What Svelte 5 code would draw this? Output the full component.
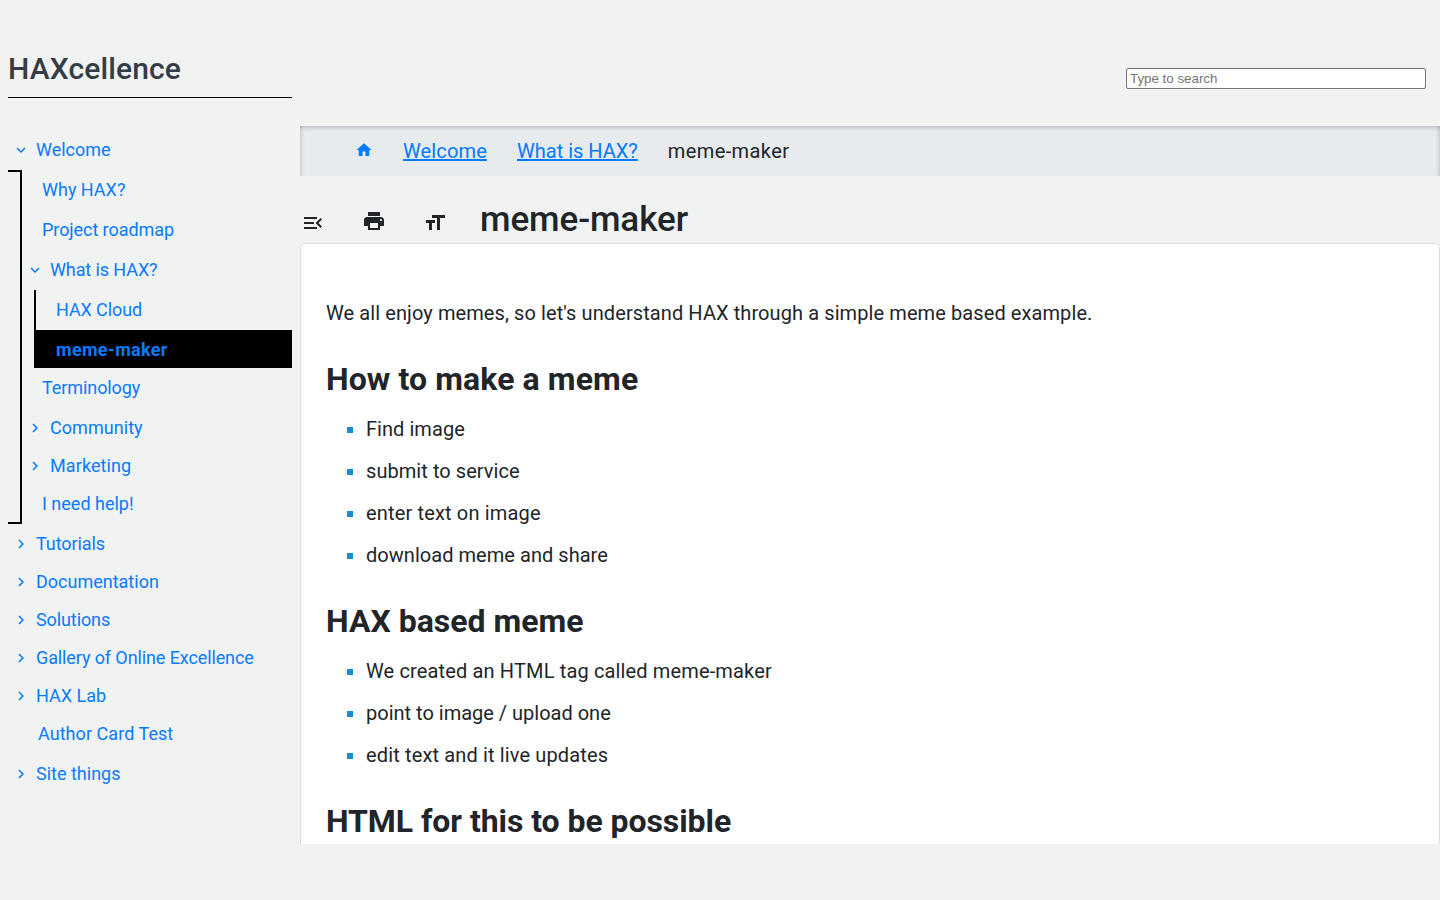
<script>
  const outline = [
    { title: 'Welcome', open: true, children: [
      { title: 'Why HAX?' },
      { title: 'Project roadmap', track: -0.07 },
      { title: 'What is HAX?', track: -0.1, open: true, children: [
        { title: 'HAX Cloud', track: -0.1 },
        { title: 'meme-maker', track: 0.3, active: true }
      ] },
      { title: 'Terminology', track: -0.08 },
      { title: 'Community', track: 0.05, children: [] },
      { title: 'Marketing', track: 0.1, children: [] },
      { title: 'I need help!' }
    ] },
    { title: 'Tutorials', track: -0.08, children: [] },
    { title: 'Documentation', children: [] },
    { title: 'Solutions', track: -0.1, children: [] },
    { title: 'Gallery of Online Excellence', track: -0.11, children: [] },
    { title: 'HAX Lab', children: [] },
    { title: 'Author Card Test', track: 0.05 },
    { title: 'Site things', children: [] }
  ];
  const sections = [
    { title: 'How to make a meme', track: 0.1, items: [
      { text: 'Find image', track: 0.05 },
      { text: 'submit to service', track: 0.06 },
      { text: 'enter text on image', track: 0.16 },
      { text: 'download meme and share', track: 0.04 }
    ] },
    { title: 'HAX based meme', track: 0, items: [
      { text: 'We created an HTML tag called meme-maker', track: 0.145 },
      { text: 'point to image / upload one', track: 0 },
      { text: 'edit text and it live updates', track: 0.14 }
    ] },
    { title: 'HTML for this to be possible', track: -0.06, items: [] }
  ];
</script>

{#snippet branch(items, depth)}
  <ul class="menu depth{depth}">
    {#each items as item}
      <li>
        <a href="#top" class="row" class:leaf={!item.children} class:open={item.open} class:active={item.active}>
          {#if item.children}
            <svg class="chevron" viewBox="0 0 24 24">
              {#if item.open}
                <path d="M16.59 8.59L12 13.17 7.41 8.59 6 10l6 6 6-6z" />
              {:else}
                <path d="M10 6L8.59 7.41 13.17 12l-4.58 4.59L10 18l6-6z" />
              {/if}
            </svg>
          {/if}
          <span style:letter-spacing="{item.track ?? 0}px">{item.title}</span>
        </a>
        {#if item.open}{@render branch(item.children, depth + 1)}{/if}
      </li>
    {/each}
  </ul>
{/snippet}

<div class="page">
  <aside>
    <h1 class="site">HAXcellence</h1>
    <nav>{@render branch(outline, 0)}</nav>
  </aside>
  <main>
    <div class="search"><input type="text" placeholder="Type to search" /></div>
    <div class="crumbs">
      <a href="#top" class="home" aria-label="Home">
        <svg viewBox="0 0 24 24"><path d="M10 20v-6h4v6h5v-8h3L12 3 2 12h3v8z" /></svg>
      </a>
      <a href="#top" class="crumb">Welcome</a>
      <a href="#top">What is HAX?</a>
      <span>meme-maker</span>
    </div>
    <header>
      <svg class="tool fold" viewBox="0 0 24 24"><path d="M3 18h13v-2H3v2zm0-5h10v-2H3v2zm0-7v2h13V6H3zm18 9.59L17.42 12 21 8.41 19.59 7l-5 5 5 5L21 15.59z" /></svg>
      <svg class="tool print" viewBox="0 0 24 24"><path d="M19 8H5c-1.66 0-3 1.34-3 3v6h4v4h12v-4h4v-6c0-1.66-1.34-3-3-3zm-3 11H8v-5h8v5zm3-7c-.55 0-1-.45-1-1s.45-1 1-1 1 .45 1 1-.45 1-1 1zm-1-9H6v4h12V3z" /></svg>
      <svg class="tool size" viewBox="0 0 24 24"><path d="M9 4v3h5v12h3V7h5V4H9zm-6 8h3v7h3v-7h3V9H3v3z" /></svg>
      <h1>meme-maker</h1>
    </header>
    <article>
      <p>We all enjoy memes, so let's understand HAX through a simple meme based example.</p>
      {#each sections as section}
        <h2 style:letter-spacing="{section.track}px">{section.title}</h2>
        <ul>
          {#each section.items as entry}
            <li style:letter-spacing="{entry.track}px">{entry.text}</li>
          {/each}
        </ul>
      {/each}
    </article>
  </main>
</div>

<style>
  :global(body) { margin: 0; background: #f0f3f2; overflow: hidden; }
  * { box-sizing: border-box; }
  .page { display: flex; width: 1440px; height: 900px; overflow: hidden; background: #f0f3f2; font-family: Roboto, sans-serif; color: #212529; }
  ul { list-style: none; margin: 0; padding: 0; }
  svg { fill: currentColor; flex: none; }

  aside { width: 300px; flex: none; padding: 40px 8px 0; }
  .site { margin: 0 0 32px; height: 58px; border-bottom: 1px solid #000; font-size: 30px; font-weight: 500; line-height: 57px; letter-spacing: .14px; color: #343d46; }
  .menu { position: relative; }
  .row { display: flex; align-items: center; height: 38px; padding-left: 4px; color: #0a7aff; font-size: 18px; line-height: 38px; text-decoration: none; }
  .row span { position: relative; top: 1px; }
  .leaf, .open { margin-bottom: 2px; }
  .chevron { width: 18px; height: 18px; margin-right: 6px; position: relative; top: 1px; }
  .leaf { padding-left: 30px; }
  .depth1 .row { padding-left: 18px; }
  .depth1 .leaf { padding-left: 34px; }
  .depth1::before { content: ''; box-sizing: border-box; position: absolute; left: 0; top: 0; bottom: 0; width: 14px; border: solid #000; border-width: 2px 2px 2px 0; }
  .depth1 > li:last-child { padding-bottom: 2px; }
  .depth1 > li:last-child .leaf { margin-bottom: 0; }
  .depth1 { height: 354px; margin-bottom: 0; }
  .depth2 { margin-left: 26px; border-left: 2px solid #000; }
  .depth2 .leaf { padding-left: 20px; }
  .depth2 > li:last-child { padding-bottom: 0; }
  .depth2 .active { margin-bottom: 0; background: #000; font-weight: 700; }

  main { flex: 1; display: flex; flex-direction: column; min-width: 0; height: 844px; overflow: hidden; }
  .search { display: flex; justify-content: flex-end; height: 126px; padding: 68px 14px 0 0; flex: none; }
  .search input { width: 300px; height: 21px; margin: 0; padding: 1px 3px; border: 1px solid #767676; border-radius: 2px; background: #fff; font: 13.333px "Liberation Sans", sans-serif; }
  .search input::placeholder { color: #757575; }
  .crumbs { flex: none; display: flex; align-items: center; gap: 30px; height: 50px; padding-left: 55px; background: #e7ebee; box-shadow: inset 0 6px 6px -6px rgba(0, 0, 0, .32), inset 5px 0 5px -5px rgba(0, 0, 0, .25), inset -5px 0 5px -5px rgba(0, 0, 0, .25); font-size: 20px; line-height: 50px; }
  .crumbs a { color: #007bff; }
  .crumbs .crumb { width: 84px; letter-spacing: .14px; }
  .crumbs span { letter-spacing: .4px; }
  .home { display: flex; width: 18px; height: 18px; }
  .home svg { width: 18px; height: 18px; margin-top: -1px; }
  header { flex: none; display: flex; height: 67px; color: #212529; }
  .tool { width: 24px; height: 24px; }
  .fold { margin: 35px 37px 0 1px; }
  .print { margin: 33px 37px 0 0; }
  .size { margin: 35px 33px 0 0; }
  header h1 { margin: 0; padding-top: 23px; font-size: 35px; line-height: 42px; font-weight: 500; letter-spacing: -.08px; }
  article { flex: 1; min-height: 0; overflow: hidden; padding: 49px 25px 0; background: #fff; border: 1px solid #dcdfe0; border-bottom: 0; border-radius: 5px 5px 0 0; font-size: 20px; }
  p { margin: 0 0 20px; line-height: 40px; letter-spacing: .092px; }
  h2 { margin: 0; height: 52px; font-size: 32px; line-height: 52px; font-weight: 700; }
  article ul { padding: 3px 0 19px 40px; }
  article li { position: relative; height: 42px; line-height: 42px; }
  article li::before { content: ''; position: absolute; left: -19px; top: 19px; width: 6px; height: 6px; background: #1190d4; }
</style>
